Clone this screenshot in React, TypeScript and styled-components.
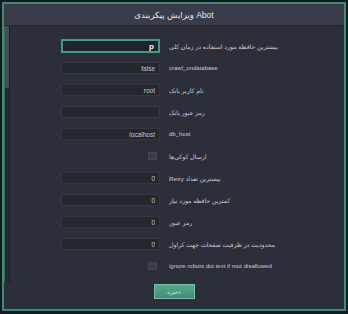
import React from 'react'
import styled, { createGlobalStyle } from 'styled-components'

const GlobalStyle = createGlobalStyle`
  html, body {
    margin: 0;
    padding: 0;
    background: #17191e;
  }
  body {
    font-family: "Liberation Sans", "DejaVu Sans", sans-serif;
  }
`

const Dialog = styled.div`
  box-sizing: border-box;
  margin: 2px 2px 0 2px;
  width: 344px;
  height: 309px;
  border: 2px solid #3f8a74;
  background: #2c2f3a;
  display: flex;
  flex-direction: column;
`

const Header = styled.div`
  flex: none;
  height: 21px;
  background: #3a3d49;
  border-bottom: 1px solid #22252c;
  display: flex;
  align-items: center;
  justify-content: center;
  color: #e4e6ea;
  font-size: 8.5px;
`

const Main = styled.div`
  flex: none;
  height: 256px;
  display: flex;
`

const ScrollTrack = styled.div`
  flex: none;
  width: 4px;
  background: #262930;
  border-left: 1px solid #356c5e;
  border-right: 1px solid #1c1e24;
  display: flex;
  flex-direction: column;
`

const ScrollThumb = styled.div`
  height: 62px;
  background: #474b54;
`

const Form = styled.div`
  flex: 1;
  display: grid;
  grid-template-columns: 99px 1fr;
  grid-auto-rows: 22px;
  column-gap: 9px;
  align-items: center;
  padding: 9px 4px 0 51px;
  border-right: 1px solid #352f40;
`

const Field = styled.input<{ $focused?: boolean }>`
  box-sizing: border-box;
  width: 99px;
  height: ${p => (p.$focused ? '14px' : '12px')};
  margin: 0;
  padding: 0 4px;
  border: ${p => (p.$focused ? '2px solid #3f9c82' : '1px solid #343741')};
  background: ${p => (p.$focused ? '#202329' : '#24272e')};
  color: ${p => (p.$focused ? '#ffffff' : '#c4c7cc')};
  font-family: "Liberation Sans", sans-serif;
  font-size: ${p => (p.$focused ? '8px' : '6.5px')};
  font-weight: ${p => (p.$focused ? 'bold' : 'normal')};
  text-align: right;
  outline: none;
`

const Check = styled.span`
  justify-self: end;
  margin-right: 3px;
  width: 9px;
  height: 8px;
  background: #3b3e47;
  border: 1px solid #44474f;
  box-sizing: border-box;
`

const Label = styled.span<{ $fa?: boolean }>`
  text-align: left;
  color: #c9ccd2;
  font-size: ${p => (p.$fa ? '6.2px' : '6px')};
  white-space: nowrap;
`

const Footer = styled.div`
  flex: 1;
  display: flex;
  justify-content: center;
  align-items: flex-start;
  padding-top: 2px;
`

const SaveButton = styled.button`
  width: 41px;
  height: 15px;
  padding: 0;
  border: 1px solid #78bfa5;
  background: linear-gradient(#58a98d, #468c76);
  color: #d8efe6;
  font-family: "DejaVu Sans", sans-serif;
  font-size: 5.5px;
`

type Row =
  | { kind: 'input'; label: string; fa?: boolean; value: string; focused?: boolean }
  | { kind: 'check'; label: string; fa?: boolean }

const rows: Row[] = [
  { kind: 'input', label: 'بیشترین حافظه مورد استفاده در زمان کلی', fa: true, value: 'p', focused: true },
  { kind: 'input', label: 'crawl_ondatabase', value: 'false' },
  { kind: 'input', label: 'نام کاربر بانک', fa: true, value: 'root' },
  { kind: 'input', label: 'رمز عبور بانک', fa: true, value: '' },
  { kind: 'input', label: 'db_host', value: 'localhost' },
  { kind: 'check', label: 'ارسال کوکی‌ها', fa: true },
  { kind: 'input', label: 'Retry بیشترین تعداد', fa: true, value: '0' },
  { kind: 'input', label: 'کمترین حافظه مورد نیاز', fa: true, value: '0' },
  { kind: 'input', label: 'رمز عبور', fa: true, value: '0' },
  { kind: 'input', label: 'محدودیت در ظرفیت صفحات جهت کراول', fa: true, value: '0' },
  { kind: 'check', label: 'ignore robots dot text if root disallowed' },
]

export default function App() {
  return (
    <>
      <GlobalStyle />
      <Dialog>
        <Header>ویرایش پیکربندی Abot</Header>
        <Main>
          <ScrollTrack>
            <ScrollThumb />
          </ScrollTrack>
          <Form>
            {rows.map((row, i) => (
              <React.Fragment key={i}>
                {row.kind === 'input' ? (
                  <Field $focused={row.focused} defaultValue={row.value} readOnly />
                ) : (
                  <Check />
                )}
                <Label $fa={row.fa}>{row.label}</Label>
              </React.Fragment>
            ))}
          </Form>
        </Main>
        <Footer>
          <SaveButton>ذخیره</SaveButton>
        </Footer>
      </Dialog>
    </>
  )
}
